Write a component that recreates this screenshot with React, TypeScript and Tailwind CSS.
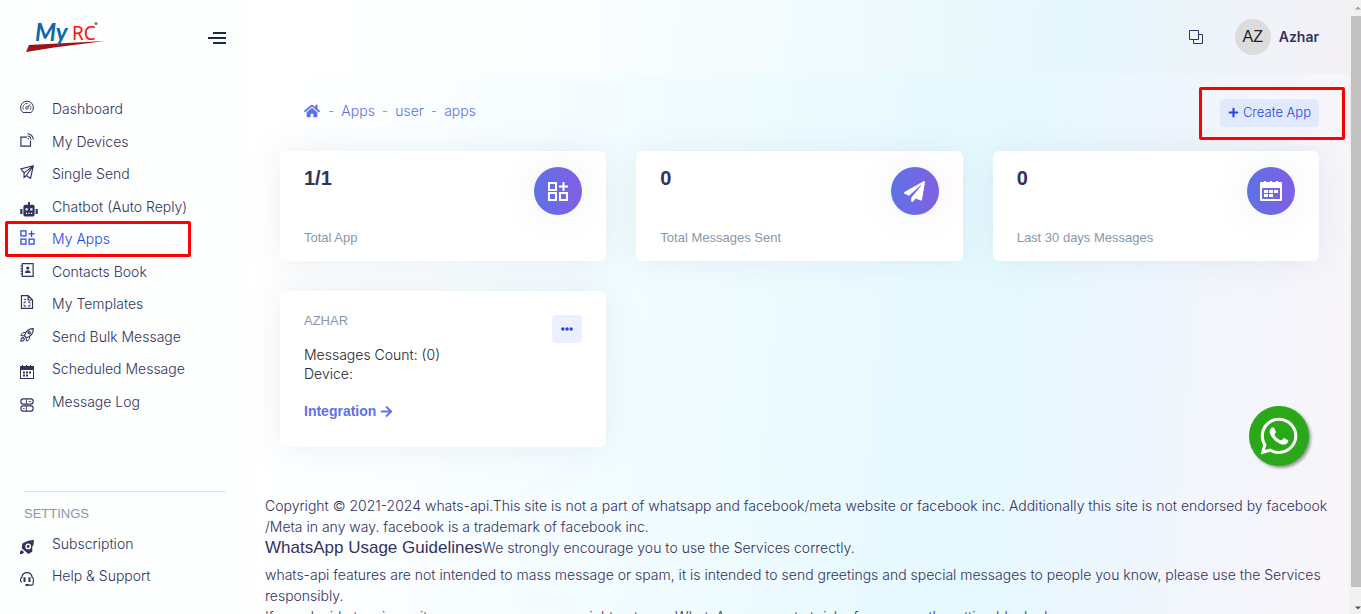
import type { ReactNode } from "react";
import { FaArrowRight, FaEllipsisH, FaHome, FaPlus, FaPaperPlane, FaWhatsapp } from "react-icons/fa";

type IconProps = { className?: string };

function Svg({ children, className = "size-4", fill = false }: IconProps & { children: ReactNode; fill?: boolean }) {
  return (
    <svg
      viewBox="0 0 24 24"
      className={className}
      fill={fill ? "currentColor" : "none"}
      stroke={fill ? "none" : "currentColor"}
      strokeWidth={2}
      aria-hidden="true"
    >
      {children}
    </svg>
  );
}

const GaugeIcon = () => (
  <Svg className="size-[14px]">
    <path d="M5 21.5A11 11 0 1 1 19 21.5Z" strokeWidth={1.7} />
    <path d="M6 16.500A7 7 0 0 1 13.500 6M17.800 10A7 7 0 0 1 18 16.500" strokeWidth={1.3} />
    <circle cx="12" cy="13.5" r="2.2" strokeWidth={1.5} />
    <path d="M13.5 12 17.5 7.5" strokeWidth={1.7} />
  </Svg>
);
const DeviceIcon = () => (
  <Svg className="size-[14px]">
    <path d="M12 7H1.5v15.5h16.5V13" />
    <path d="M13 1.2A10 10 0 0 1 22.8 11M13 5.2A6 6 0 0 1 18.8 11" strokeWidth={1.8} />
    <circle cx="14.3" cy="9.8" r="1.2" fill="currentColor" stroke="none" />
  </Svg>
);
const SendIcon = () => (
  <Svg className="size-[14px]">
    <path d="M22.8 1.2 1.5 6.8 7 13.5V21.500l4-3.500 7 5Z M7 13.5 22.5 1.5 11 18" />
  </Svg>
);
const RobotIcon = () => (
  <svg viewBox="0 0 28 24" className="h-[15px] w-[18px]" fill="currentColor" aria-hidden="true">
    <path
      fillRule="evenodd"
      d="M12.500 0h3v4.500H20a3 3 0 0 1 3 3V20a3 3 0 0 1-3 3H8a3 3 0 0 1-3-3V7.500a3 3 0 0 1 3-3h4.500ZM8.500 10v3.500H12V10Zm7.500 0v3.500h3.500V10ZM9 17v2h2v-2Zm4 0v2h2v-2Zm4 0v2h2v-2Z"
    />
    <path d="M0 11h3.500v8H0ZM24.500 11H28v8h-3.500Z" />
  </svg>
);
const AppsIcon = ({ className = "size-[15px]" }: IconProps) => (
  <Svg className={className}>
    <path d="M1.500 1.500h8v8h-8ZM1.500 14.500h8v8h-8ZM14.500 14.500h8v8h-8ZM18.500 1v10M13.500 6h10" />
  </Svg>
);
const AppsBoldIcon = () => (
  <svg viewBox="0 0 22 21" className="h-[21px] w-[22px]" fill="none" stroke="currentColor" strokeWidth={2} aria-hidden="true">
    <path d="M2 2h7v7H2ZM2 12h7v7H2ZM13 12h7v7h-7ZM16.500 1v9M12 5.500h9" />
  </svg>
);
const ContactsIcon = () => (
  <Svg className="size-[14px]">
    <path d="M4 1.200h18.500v21.600H4ZM1 5h4M1 9.500h4M1 14h4M1 18.500h4" />
    <circle cx="13.300" cy="8.500" r="2.700" fill="currentColor" stroke="none" />
    <path d="M8.500 17c0-6 9.500-6 9.500 0Z" fill="currentColor" stroke="none" />
  </Svg>
);
const TemplateIcon = () => (
  <Svg className="size-[14px]">
    <path d="M2.500 1.200H14L21.500 8.500v14.300h-19ZM14 1.500V8.500h7" />
    <path d="M10.500 12H7v2.500M7 16.500V19h3.500M13.500 12H17v2.500M17 16.500V19h-3.500M6.500 7.500h4" strokeWidth={1.700} />
  </Svg>
);
const RocketIcon = () => (
  <Svg className="size-[14px]">
    <path d="M22.800 1.200C15 1 10 5 7.500 13.500l3.500 3.200C19.500 14 23 9 22.800 1.200Z" />
    <path d="M9.500 7.500C5 7 3 9 1.500 13l6 .5M16.500 14.500c.5 4.500-1.500 6.500-5.500 8l-.3-5.500" strokeWidth={1.700} />
    <circle cx="15.800" cy="8.200" r="1.900" />
    <path d="M5.500 16.500c-3 0-4 2.500-4 6 3.500 0 6-1 6-4Z" strokeWidth={1.800} />
  </Svg>
);
const CalendarIcon = () => (
  <svg viewBox="0 0 14 14" className="size-[14px]" fill="currentColor" aria-hidden="true">
    <path
      fillRule="evenodd"
      d="M0 1h2V0h1v1h3V0h1v1h3V0h1v1h3v13H0ZM1 5v8h12V5ZM3 6.500h2v2H3ZM6 6.500h2v2H6ZM9 6.500h2v2H9ZM3 9.500h2v2H3ZM6 9.500h2v2H6Z"
    />
  </svg>
);
const CalendarBoldIcon = () => (
  <svg viewBox="0 0 22 20" className="h-5 w-[22px]" fill="currentColor" aria-hidden="true">
    <path
      fillRule="evenodd"
      d="M0 2a1 1 0 0 1 1-1h3V0h2v1h4V0h2v1h4V0h2v1h3a1 1 0 0 1 1 1v17a1 1 0 0 1-1 1H1a1 1 0 0 1-1-1ZM2 7v11h18V7Z"
    />
    <path d="M4 9h4v3H4ZM9 9h4v3H9ZM14 9h4v3h-4ZM4 13h4v3H4ZM9 13h4v3H9Z" />
  </svg>
);
const LogIcon = () => (
  <Svg className="size-[14px]">
    <rect x="1.500" y="1.500" width="21" height="9" rx="4" />
    <rect x="1.500" y="13.500" width="21" height="9" rx="4" />
    <path d="M11 2v8M11 14v8M15 6h4M5 18h3" strokeWidth={1.500} />
  </Svg>
);
const RocketSolidIcon = () => (
  <Svg className="size-[14px]" fill>
    <path
      fillRule="evenodd"
      d="M24 0 23 8l-2 4v8l-7 4-3-3-8-7 1-8 8-4 4-1ZM14 6a5 5 0 1 0 .1 10A5 5 0 0 0 14 6Zm0 2.500a2.500 2.500 0 1 1 0 5 2.500 2.500 0 0 1 0-5Z"
    />
    <path d="M3 17l4 4-3 3H0v-4Z" />
  </Svg>
);
const HeadsetIcon = () => (
  <Svg className="size-[14px]">
    <path d="M3 10C4 -2 20 -2 21 10" />
    <path d="M3.500 9C0 10 0 17 3.500 18M20.500 9c3 1 3 5 2 8v3c0 1.500-1 2.500-2.500 2.500h-5" />
    <path d="M6 9h3.500v8H6ZM14.500 9H18v8h-3.500ZM9.500 20.500h5.500V24H9.500Z" fill="currentColor" stroke="none" />
  </Svg>
);

type NavItem = { label: string; icon: ReactNode; low?: boolean; active?: boolean };

const menu: NavItem[] = [
  { label: "Dashboard", icon: <GaugeIcon /> },
  { label: "My Devices", icon: <DeviceIcon /> },
  { label: "Single Send", icon: <SendIcon /> },
  { label: "Chatbot (Auto Reply)", icon: <RobotIcon />, low: true },
  { label: "My Apps", icon: <AppsIcon />, active: true },
  { label: "Contacts Book", icon: <ContactsIcon /> },
  { label: "My Templates", icon: <TemplateIcon /> },
  { label: "Send Bulk Message", icon: <RocketIcon /> },
  { label: "Scheduled Message", icon: <CalendarIcon />, low: true },
  { label: "Message Log", icon: <LogIcon />, low: true },
];

const settings: NavItem[] = [
  { label: "Subscription", icon: <RocketSolidIcon />, low: true },
  { label: "Help & Support", icon: <HeadsetIcon />, low: true },
];

function NavLink({ label, icon, low, active }: NavItem) {
  return (
    <li className="relative">
      <a href="#" className={`flex h-8 items-center pl-5 ${active ? "text-[#2643e9]" : "text-[#32325d]"}`}>
        <span className={`flex w-8 shrink-0 ${low ? "pt-1.5" : "pb-1"}`}>{icon}</span>
        {label}
      </a>
      {active && <span className="pointer-events-none absolute -inset-y-0.5 right-[59px] left-[5px] rounded-xs border-3 border-[#ff0000]" />}
    </li>
  );
}

function Logo() {
  return (
    <svg viewBox="0 0 82 36" className="h-9 w-[82px] overflow-visible" role="img" aria-label="My RC">
      <path d="M3 25 79 21 28 27.500 0 32Z" fill="#a01018" />
      <text x="9" y="21" fontFamily="Lato" fontStyle="italic" fontWeight="700" fontSize="24" fill="#0f66a8">My</text>
      <text x="46" y="20" fontFamily="Noto Sans" fontWeight="400" fontSize="19" fill="#ff1010">RC</text>
      <circle cx="70" cy="3.500" r="1.500" fill="#777" />
    </svg>
  );
}

const stats = [
  { value: "1/1", label: "Total App", icon: <AppsBoldIcon /> },
  { value: "0", label: "Total Messages Sent", icon: <FaPaperPlane className="size-[21px]" /> },
  { value: "0", label: "Last 30 days Messages", icon: <CalendarBoldIcon /> },
];

const cardClass = "rounded-md bg-white px-6 shadow-[0_0_32px_0_rgba(136,152,170,0.15)]";

export default function App() {
  return (
    <div className="flex h-screen overflow-hidden bg-white font-['Inter','Liberation_Sans',sans-serif] text-sm font-light text-[#32325d]">
      <aside className="flex w-[250px] shrink-0 flex-col bg-[#fdfefe]">
        <div className="flex h-[76px] items-center justify-between pr-6 pl-[26px]">
          <Logo />
          <button type="button" aria-label="Toggle menu" className="flex flex-col items-end gap-[3px]">
            <span className="h-0.5 w-[13px] bg-[#172b4d]" />
            <span className="h-0.5 w-[18px] bg-[#172b4d]" />
            <span className="h-0.5 w-[13px] bg-[#172b4d]" />
          </button>
        </div>
        <nav className="flex flex-col pt-[17px]">
          <ul className="flex h-[325px] flex-col justify-between">
            {menu.map((item) => (
              <NavLink key={item.label} {...item} />
            ))}
          </ul>
          <hr className="mx-6 mt-[73px] border-[#dfe3e6]" />
          <h6 className="mt-3 mb-1 pl-6 font-['Liberation_Sans',sans-serif] text-[13px] leading-5 font-normal text-[#8898aa]">SETTINGS</h6>
          <ul>
            {settings.map((item) => (
              <NavLink key={item.label} {...item} />
            ))}
          </ul>
        </nav>
      </aside>

      <div className="relative flex min-w-0 flex-1 flex-col bg-[linear-gradient(95deg,#ffffff_0%,#fbfeff_15%,#e5f9ff_67%,#f0f6fd_82%,#f9f5fa_100%)]">
        <header className="flex h-[74px] shrink-0 items-center justify-end bg-[linear-gradient(95deg,#ffffff_0%,#fbfefe_30%,#e5f7fc_76%,#eef4fa_88%,#f4f1f6_100%)] pr-[30px]">
          <button type="button" aria-label="Copy" className="mr-[32px]">
            <svg viewBox="0 0 14 14" className="size-[14px]" fill="none" stroke="#32325d" strokeWidth="1" aria-hidden="true">
              <path d="M.5.500h9v9h-9ZM9.500 4.500h4v9h-9v-4" />
            </svg>
          </button>
          <a href="#" className="flex items-center gap-2 font-semibold">
            <span className="flex size-9 items-center justify-center rounded-full bg-[#dcdcdc] font-['Liberation_Sans',sans-serif] text-base font-normal text-[#222222]">AZ</span>
            Azhar
          </a>
        </header>

        <main className="flex min-h-0 flex-1 flex-col">
          <div className="flex h-[77px] shrink-0 items-center justify-between pr-[30px] pl-[54px]">
            <nav aria-label="Breadcrumb" className="pb-1">
              <ol className="flex items-center gap-[7px] text-[#5e72e4]">
                <li className="mr-px"><a href="#" aria-label="Home"><FaHome className="size-4" /></a></li>
                <li className="text-[#8898aa]">-</li>
                <li><a href="#">Apps</a></li>
                <li className="text-[#8898aa]">-</li>
                <li><a href="#">user</a></li>
                <li className="text-[#8898aa]">-</li>
                <li><a href="#">apps</a></li>
              </ol>
            </nav>
            <div className="relative">
              <button type="button" className="flex h-7 items-center gap-1 rounded-sm bg-[#e1eafc] px-2 text-[13px] text-[#2643e9]">
                <FaPlus className="size-[11px]" />
                Create App
              </button>
              <span className="pointer-events-none absolute -top-3 -right-[26px] -bottom-[13px] -left-[21px] rounded-xs border-3 border-[#ff0000]" />
            </div>
          </div>

          <div className="grid grid-cols-3 gap-[30px] pr-[30px] pl-[30px]">
            {stats.map((s) => (
              <section key={s.label} className={`${cardClass} flex h-[110px] flex-col justify-between pt-4 pb-[15px] font-['Liberation_Sans',sans-serif] font-normal`}>
                <div className="flex justify-between">
                  <span className="text-xl leading-[22px] font-bold">{s.value}</span>
                  <span className="flex size-12 items-center justify-center rounded-full bg-[linear-gradient(87deg,#5e72e4,#825ee4)] text-white shadow-[0_0_32px_0_rgba(136,152,170,0.15)]">
                    {s.icon}
                  </span>
                </div>
                <p className="text-[13px] leading-4 text-[#8898aa]">{s.label}</p>
              </section>
            ))}
            <section className={`${cardClass} flex h-[156px] items-start justify-between py-5`}>
              <div>
                <h6 className="mb-3.5 font-['Liberation_Sans',sans-serif] text-[13px] leading-5 font-normal text-[#8898aa]">AZHAR</h6>
                <p className="leading-[19px] text-[#212529]">
                  Messages Count: (0)
                  <br />
                  Device:
                </p>
                <a href="#" className="mt-[18px] flex items-center gap-1 font-['Liberation_Sans',sans-serif] font-bold text-[#5e72e4]">
                  Integration
                  <FaArrowRight className="size-[13px]" />
                </a>
              </div>
              <button type="button" aria-label="More actions" className="mt-1 flex h-7 w-[30px] items-center justify-center rounded-sm bg-[#eaf0ff] text-[#2643e9]">
                <FaEllipsisH className="size-3" />
              </button>
            </section>
          </div>

          <footer className="mt-12 pr-4 pl-[15px] leading-[21px]">
            <p>
              Copyright © 2021-2024 whats-api.This site is not a part of whatsapp and facebook/meta website or facebook inc. Additionally this site is not endorsed by facebook /Meta in any way. facebook is a trademark of facebook inc.
            </p>
            <p className="mb-1.5">
              <span className="font-['Liberation_Sans',sans-serif] text-[17px] font-normal">WhatsApp Usage Guidelines</span>We strongly encourage you to use the Services correctly.
            </p>
            <p>
              whats-api features are not intended to mass message or spam, it is intended to send greetings and special messages to people you know, please use the Services responsibly.
              <br />
              If you decide to misuse it, you are on your own, might put your WhatsApp account at risk of permanently getting blocked.
            </p>
          </footer>
        </main>

        <a
          href="#"
          aria-label="Chat on WhatsApp"
          className="absolute right-[40px] bottom-[148px] flex size-[60px] items-center justify-center rounded-full bg-[#2aa81a] text-white shadow-[2px_2px_3px_#999999]"
        >
          <FaWhatsapp className="size-[42px]" />
        </a>
      </div>

      <div className="flex w-3 shrink-0 flex-col bg-[#f1f1f1] pl-0.5" aria-hidden="true">
        <div className="flex h-4 items-center justify-center pl-1">
          <svg viewBox="0 0 8 4" className="h-1 w-2" fill="#a3a3a3"><path d="M0 4 4 0l4 4Z" /></svg>
        </div>
        <div className="flex-1 bg-[#c1c1c1]" />
        <div className="flex h-[27px] items-end justify-center pb-1 pl-1">
          <svg viewBox="0 0 8 4" className="h-1 w-2" fill="#505050"><path d="M0 0 4 4l4-4Z" /></svg>
        </div>
      </div>
    </div>
  );
}
